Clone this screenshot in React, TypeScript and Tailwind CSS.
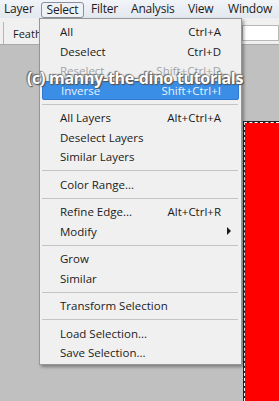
import React from 'react';

type Item =
  | { kind: 'item'; label: string; shortcut?: string; disabled?: boolean; active?: boolean; submenu?: boolean }
  | { kind: 'sep' };

const menuItems: Item[] = [
  { kind: 'item', label: 'All', shortcut: 'Ctrl+A' },
  { kind: 'item', label: 'Deselect', shortcut: 'Ctrl+D' },
  { kind: 'item', label: 'Reselect', shortcut: 'Shift+Ctrl+D', disabled: true },
  { kind: 'item', label: 'Inverse', shortcut: 'Shift+Ctrl+I', active: true },
  { kind: 'sep' },
  { kind: 'item', label: 'All Layers', shortcut: 'Alt+Ctrl+A' },
  { kind: 'item', label: 'Deselect Layers' },
  { kind: 'item', label: 'Similar Layers' },
  { kind: 'sep' },
  { kind: 'item', label: 'Color Range...' },
  { kind: 'sep' },
  { kind: 'item', label: 'Refine Edge...', shortcut: 'Alt+Ctrl+R' },
  { kind: 'item', label: 'Modify', submenu: true },
  { kind: 'sep' },
  { kind: 'item', label: 'Grow' },
  { kind: 'item', label: 'Similar' },
  { kind: 'sep' },
  { kind: 'item', label: 'Transform Selection' },
  { kind: 'sep' },
  { kind: 'item', label: 'Load Selection...' },
  { kind: 'item', label: 'Save Selection...' },
];

// fixed slots so labels land where the reference has them
const topMenus = [
  { label: 'Layer', cls: 'w-[37px]' },
  { label: 'Select', cls: 'w-[43px]', open: true },
  { label: 'Filter', cls: 'ml-[7px] w-[40px]' },
  { label: 'Analysis', cls: 'w-[57px]' },
  { label: 'View', cls: 'w-[40px]' },
  { label: 'Window', cls: 'w-[48px]' },
];

const App: React.FC = () => {
  return (
    <div
      className="relative w-[279px] h-[401px] overflow-hidden bg-[#c0c0c0] flex flex-col text-[#1b1b1b]"
      style={{ fontFamily: '"Open Sans", "Noto Sans", sans-serif' }}
    >
      {/* menu bar */}
      <div className="h-[18px] pl-[4px] flex items-center bg-gradient-to-b from-[#f1f4f9] to-[#e3e8f0] text-[12px] tracking-[-0.2px] leading-none whitespace-nowrap">
        {topMenus.map((m) =>
          m.open ? (
            <div
              key={m.label}
              className={`${m.cls} shrink-0 h-[16px] mt-[1px] flex items-center justify-center border border-[#8a8f98] rounded-[3px] bg-[#eef1f6]`}
            >
              {m.label}
            </div>
          ) : (
            <div key={m.label} className={`${m.cls} shrink-0`}>
              {m.label}
            </div>
          )
        )}
      </div>

      {/* options bar */}
      <div className="h-[27px] bg-[#f0f0f0] border-b border-[#a9a9a9] flex items-center">
        <div className="ml-[3px] w-px h-[22px] bg-[#b5b5b5] self-end" />
        <div className="ml-[9px] mt-[7px] text-[11px]">Feather:</div>
        <div className="ml-auto mt-[3px] w-[37px] h-[16px] bg-white border border-[#b9b9b9]" />
      </div>

      {/* workspace */}
      <div className="flex-1 flex justify-end pt-[76px]">
        <div className="w-[36px] bg-[#222] pl-px pt-px">
          <div className="h-full bg-[#ff0000] bg-clip-padding border-l border-t border-dashed border-white" />
        </div>
      </div>

      {/* open dropdown */}
      <div className="absolute left-[39px] top-[18px] w-[203px] bg-[#f0f0f0] border border-[#979797] shadow-[2px_2px_3px_rgba(0,0,0,0.35)] pt-[3px] pb-[1px] text-[11.5px] leading-none">
        {menuItems.map((it, i) =>
          it.kind === 'sep' ? (
            <div key={i} className="h-[8px] flex items-center pl-[2px] pr-[3px]">
              <div className="w-full h-px bg-[#c4c4c4]" />
            </div>
          ) : (
            <div
              key={i}
              className={`h-[19.5px] flex items-center ${
                it.active
                  ? 'mx-[2px] pl-[18px] pr-[17px] bg-[#3b8ee6] border border-[#2d79cf] rounded-[2px] text-[#e6f1ff]'
                  : 'pl-[20px] pr-[20px]'
              } ${it.disabled ? 'text-[#a4a4a4]' : ''}`}
            >
              <span className="flex-1 whitespace-nowrap">{it.label}</span>
              {it.shortcut && <span className="whitespace-nowrap">{it.shortcut}</span>}
              {it.submenu && (
                <span className="mr-[-10px] w-0 h-0 border-y-[4px] border-y-transparent border-l-[4px] border-l-[#1b1b1b]" />
              )}
            </div>
          )
        )}
      </div>

      {/* watermark */}
      <div
        className="absolute left-[27px] top-[66px] text-[16px] font-bold tracking-[-0.3px] text-white whitespace-nowrap [text-shadow:0_0_2px_#4a4a4a,1px_1px_1px_#555,-1px_-1px_1px_#777]"
        style={{ fontFamily: '"Open Sans", sans-serif' }}
      >
        (c) manny-the-dino tutorials
      </div>
    </div>
  );
};

export default App;
